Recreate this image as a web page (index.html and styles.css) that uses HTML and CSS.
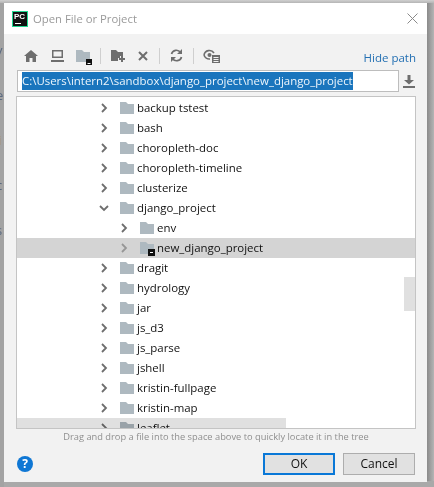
FILE: index.html
```html
<!DOCTYPE html>
<html lang="en">
<head>
<meta charset="utf-8">
<title>Open File or Project</title>
<link rel="stylesheet" href="styles.css">
</head>
<body>
<svg width="0" height="0" class="defs">
  <symbol id="folder" viewBox="0 0 14 12"><path d="M0 0h6l2 2h6v10H0z" fill="#aeb9c0"/></symbol>
  <symbol id="right" viewBox="0 0 10 10"><path d="M3 1l4 4-4 4" fill="none" stroke="#6e6e6e" stroke-width="1.8"/></symbol>
  <symbol id="down" viewBox="0 0 10 10"><path d="M1 3l4 4 4-4" fill="none" stroke="#6e6e6e" stroke-width="1.8"/></symbol>
</svg>
<div class="desktop">
  <div class="behind"><span>v</span><span>e</span><span class="orange">i</span><span>c</span><span>s</span></div>
  <main class="dialog">
    <header class="titlebar">
      <div class="logo"><span class="logo-text">PC</span><i class="logo-bar"></i></div>
      <h1 class="title">Open File or Project</h1>
      <svg class="close" width="11" height="11" viewBox="0 0 11 11"><path d="M.5.5l10 10M10.5.5l-10 10" stroke="#8a8a8a" fill="none"/></svg>
    </header>
    <div class="body">
      <div class="toolbar">
        <svg class="tool t-home" width="14" height="12" viewBox="0 0 14 12"><path d="M7 0l7 6h-2v6H8.500V8h-3v4H2V6H0z" fill="#6e6e6e"/></svg>
        <svg class="tool t-mon" width="13" height="12" viewBox="0 0 13 12"><path d="M1 0h11v8H1zM2.500 1.500v5h8v-5zM0 10h13v2H0z" fill="#6e6e6e" fill-rule="evenodd"/></svg>
        <svg class="tool t-pf" width="16" height="15" viewBox="0 0 16 15"><path d="M0 0h6l2 2h6v10H0z" fill="#aeb9c0"/><path d="M10 9h6v6h-6z" fill="#111"/><path d="M11.500 13h3v1h-3z" fill="#fff"/></svg>
        <i class="sep s1"></i>
        <svg class="tool t-new" width="14" height="12" viewBox="0 0 14 12"><path d="M0 0h5l2 2h5v4H9v2H7v3H0z" fill="#6e6e6e"/><path d="M10 6h2v2h2v2h-2v2h-2v-2H8V8h2z" fill="#6e6e6e"/></svg>
        <svg class="tool t-x" width="10" height="10" viewBox="0 0 10 10"><path d="M1 1l8 8M9 1l-8 8" stroke="#6e6e6e" stroke-width="2" fill="none"/></svg>
        <i class="sep s2"></i>
        <svg class="tool t-ref" width="13" height="13" viewBox="0 0 13 13"><path d="M1.500 5A5 5 0 0 1 10.500 3.500M11.500 8A5 5 0 0 1 2.500 9.500" stroke="#6e6e6e" stroke-width="1.700" fill="none"/><path d="M12 0v5H7zM1 13V8h5z" fill="#6e6e6e"/></svg>
        <i class="sep s3"></i>
        <svg class="tool t-eye" width="17" height="14" viewBox="0 0 17 14"><path d="M1 6a5.500 5.500 0 0 1 10-2" stroke="#6e6e6e" stroke-width="1.600" fill="none"/><path d="M1 6a5.500 5.500 0 0 0 6 4" stroke="#6e6e6e" stroke-width="1.600" fill="none"/><circle cx="6.500" cy="6" r="2" fill="#6e6e6e"/><path d="M9 6h8v8H9z" fill="#6e6e6e"/><path d="M10.500 8.500h5M10.500 10.500h5M10.500 12.500h5" stroke="#f2f2f2"/></svg>
        <a class="hide-path">Hide path</a>
      </div>
      <div class="path-row">
        <div class="path-input"><span class="selected">C:\Users\intern2\sandbox\django_project\new_django_project</span></div>
        <svg class="dl" width="12" height="13" viewBox="0 0 12 13"><path d="M4.500 0h3v5H11L6 9.500 1 5h3.500zM0 11h12v2H0z" fill="#6e6e6e"/></svg>
      </div>
      <div class="tree">
        <div class="row"><svg class="chev"><use href="#right"/></svg><svg class="fold"><use href="#folder"/></svg><span>backup tstest</span></div>
        <div class="row"><svg class="chev"><use href="#right"/></svg><svg class="fold"><use href="#folder"/></svg><span>bash</span></div>
        <div class="row"><svg class="chev"><use href="#right"/></svg><svg class="fold"><use href="#folder"/></svg><span>choropleth-doc</span></div>
        <div class="row"><svg class="chev"><use href="#right"/></svg><svg class="fold"><use href="#folder"/></svg><span>choropleth-timeline</span></div>
        <div class="row"><svg class="chev"><use href="#right"/></svg><svg class="fold"><use href="#folder"/></svg><span>clusterize</span></div>
        <div class="row"><svg class="chev"><use href="#down"/></svg><svg class="fold"><use href="#folder"/></svg><span>django_project</span></div>
        <div class="row sub"><svg class="chev"><use href="#right"/></svg><svg class="fold"><use href="#folder"/></svg><span>env</span></div>
        <div class="row sub current"><svg class="chev"><use href="#right"/></svg><svg class="fold"><use href="#folder"/></svg><b class="badge"></b><span>new_django_project</span></div>
        <div class="row"><svg class="chev"><use href="#right"/></svg><svg class="fold"><use href="#folder"/></svg><span>dragit</span></div>
        <div class="row"><svg class="chev"><use href="#right"/></svg><svg class="fold"><use href="#folder"/></svg><span>hydrology</span></div>
        <div class="row"><svg class="chev"><use href="#right"/></svg><svg class="fold"><use href="#folder"/></svg><span>jar</span></div>
        <div class="row"><svg class="chev"><use href="#right"/></svg><svg class="fold"><use href="#folder"/></svg><span>js_d3</span></div>
        <div class="row"><svg class="chev"><use href="#right"/></svg><svg class="fold"><use href="#folder"/></svg><span>js_parse</span></div>
        <div class="row"><svg class="chev"><use href="#right"/></svg><svg class="fold"><use href="#folder"/></svg><span>jshell</span></div>
        <div class="row"><svg class="chev"><use href="#right"/></svg><svg class="fold"><use href="#folder"/></svg><span>kristin-fullpage</span></div>
        <div class="row"><svg class="chev"><use href="#right"/></svg><svg class="fold"><use href="#folder"/></svg><span>kristin-map</span></div>
        <div class="row"><svg class="chev"><use href="#right"/></svg><svg class="fold"><use href="#folder"/></svg><span>leaflet</span></div>
        <i class="vthumb"></i>
        <i class="hthumb"></i>
      </div>
      <p class="hint">Drag and drop a file into the space above to quickly locate it in the tree</p>
      <footer class="footer">
        <span class="help">?</span>
        <button class="btn primary">OK</button>
        <button class="btn">Cancel</button>
      </footer>
    </div>
  </main>
  <div class="shadow"></div>
</div>
</body>
</html>
```
FILE: styles.css
```css
* { box-sizing: border-box; }
html, body { margin: 0; height: 100%; }
body { background: #a9a9a9; font-family: "Open Sans", "Noto Sans", sans-serif; font-size: 11.45px; overflow: hidden; }
.defs { position: absolute; }
.desktop { display: flex; width: 434px; height: 487px; padding-top: 3px; background: linear-gradient(#d0d0d0, #b5b5b5 3px, #a9a9a9 3px); }
.behind { width: 4px; overflow: hidden; display: flex; flex-direction: column; padding-top: 38px; gap: 27px; color: #5a6a80; font-size: 13px; line-height: 18px; background: #a3a3a3; text-indent: -4px; }
.behind span { display: block; height: 18px; }
.behind .orange { color: #a87a40; text-indent: -2px; }
.dialog { width: 423px; height: 479px; background: #f2f2f2; display: flex; flex-direction: column; flex: none; }
.shadow { flex: 1; height: 478px; background: linear-gradient(90deg, #8a8a8a, #b5b5b5); }
.titlebar { height: 31px; background: #fff; display: flex; align-items: center; padding: 0 9px 0 8px; flex: none; }
.logo { width: 16px; height: 16px; background: #111; border: 1px solid #1fd890; position: relative; flex: none; }
.logo-text { position: absolute; left: 1px; top: 0; color: #fff; font: 700 8px/9px "Liberation Sans", sans-serif; }
.logo-bar { position: absolute; left: 2px; bottom: 2px; width: 6px; height: 1px; background: #fff; }
.title { margin: 0 0 0 5px; flex: 1; font-size: 11.3px; font-weight: 400; color: #9a9a9a; white-space: nowrap; line-height: 16px; }
.close { flex: none; }
.body { flex: 1; display: flex; flex-direction: column; padding: 0 11px 0 12px; }
.toolbar { height: 37px; flex: none; display: flex; align-items: center; padding-left: 8px; padding-top: 6px; }
.tool { flex: none; }
.t-mon { margin-left: 13px; }
.t-pf { margin-left: 12px; margin-top: 3px; }
.sep { width: 1px; height: 16px; background: #cfcfcf; flex: none; }
.s1 { margin-left: 8px; }
.t-new { margin-left: 10px; }
.t-x { margin-left: 13px; }
.s2 { margin-left: 11px; }
.t-ref { margin-left: 10px; }
.s3 { margin-left: 10px; }
.t-eye { margin-left: 9px; }
.hide-path { margin-left: auto; color: #2470b3; font-size: 11.5px; padding-top: 4px; }
.path-row { display: flex; align-items: center; height: 22px; flex: none; margin-top: -1px; }
.path-input { width: 382px; height: 22px; margin-left: 1px; background: #fff; border: 1px solid #bdbdbd; padding: 1px 0 0 4px; overflow: hidden; white-space: nowrap; line-height: 18px; flex: none; }
.selected { background: #1a75bd; color: #eef6fc; display: inline-block; height: 18px; }
.dl { margin-left: 4px; flex: none; }
.tree { position: relative; height: 333px; margin-top: 4px; background: #fff; border: 1px solid #c4c4c4; overflow: hidden; width: 400px; padding-top: 1px; flex: none; }
.row { height: 20px; display: flex; align-items: center; padding-left: 82px; color: #111; white-space: nowrap; }
.row.sub { padding-left: 102px; }
.row.current { background: #d4d4d4; position: relative; }
.chev { width: 10px; height: 10px; flex: none; }
.current .chev { opacity: 0.6; }
.fold { width: 14px; height: 12px; margin-left: 11px; flex: none; }
.row span { margin-left: 3px; margin-bottom: 2px; }
.badge { position: absolute; left: 131px; top: 11px; width: 7px; height: 7px; background: #111; border-bottom: 2px solid #111; }
.badge::after { content: ""; display: block; width: 3px; height: 1px; margin: 3px 0 0 2px; background: #fff; }
.vthumb { position: absolute; right: 0; top: 180px; width: 11px; height: 34px; background: #e0e0e0; }
.hthumb { position: absolute; left: 0; bottom: 0; width: 269px; height: 10px; background: #e0e0e0; mix-blend-mode: multiply; }
.hint { margin: 0 0 1px; height: 16px; text-align: center; font-size: 9.3px; line-height: 16px; color: #8f8f8f; }
.footer { display: flex; align-items: center; margin-top: 7px; padding-right: 1px; }
.help { width: 16px; height: 16px; margin-left: 1px; margin-right: auto; border-radius: 50%; background: #0f77d4; color: #fff; font: 700 12px/16px "Open Sans", sans-serif; text-align: center; }
.btn { width: 72px; height: 22px; margin-left: 8px; padding: 0; background: #e1e1e1; border: 1px solid #adadad; font: 12px/18px "Open Sans", sans-serif; color: #111; }
.btn.primary { border: 2px solid #0a78d7; }
```
